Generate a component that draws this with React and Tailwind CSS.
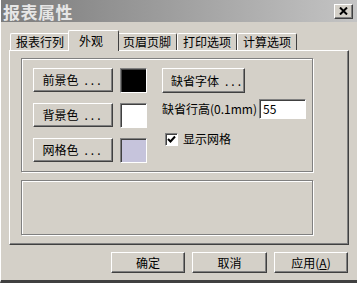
import React from 'react';

const font = { fontFamily: '"Noto Sans CJK SC", "Liberation Sans", sans-serif' };

const raised =
  'bg-[#d4d0c8] border border-t-white border-l-white border-r-[#404040] border-b-[#404040] shadow-[inset_-1px_-1px_0_#808080]';
const sunken =
  'border border-t-[#808080] border-l-[#808080] border-r-white border-b-white shadow-[inset_1px_1px_0_#404040]';
const etched = 'border border-[#808080] shadow-[inset_1px_1px_0_#fff,1px_1px_0_#fff]';

const Btn = ({ children, className = '' }) => (
  <div className={`${raised} flex items-center justify-center whitespace-nowrap text-[12px] text-black ${className}`}>
    {children}
  </div>
);

const Dots = () => <span className="ml-[6px] tracking-[3px]">...</span>;

const ColorRow = ({ label, color }) => (
  <div className="flex items-start gap-[7px]">
    <Btn className="w-[80px] h-[24px]">
      {label}
      <Dots />
    </Btn>
    <div className={`${sunken} w-[27px] h-[25px] ${color}`} />
  </div>
);

const Tab = ({ label, active, className = '' }) =>
  active ? (
    <div
      className={`relative z-10 -mx-[2px] -mb-px h-[21px] w-[51px] bg-[#d4d0c8] border-t border-l border-r border-t-white border-l-white border-r-[#404040] rounded-t-[2px] pl-[10px] pt-[1px] text-[12px] ${className}`}
    >
      {label}
    </div>
  ) : (
    <div
      className={`h-[17px] bg-[#d4d0c8] border-t border-l border-r border-t-white border-l-white border-r-[#404040] rounded-t-[2px] flex items-center justify-center text-[12px] ${className}`}
    >
      {label}
    </div>
  );

export default function App() {
  return (
    <div
      style={font}
      className="w-[357px] h-[283px] bg-[#d4d0c8] text-black overflow-hidden border-l border-l-white border-b-[3px] border-b-[#404040]"
    >
      {/* title bar */}
      <div className="h-[22px] bg-gradient-to-r from-[#7c7c7c] via-[#a0a0a0] to-[#c4c4c4] flex items-center justify-between pl-[2px] pr-[4px]">
        <span className="text-[17px] font-bold text-[#e6e6e6] leading-none tracking-[0.5px]">报表属性</span>
        <div className={`${raised} w-[19px] h-[15px] flex items-center justify-center`}>
          <svg width="9" height="8" viewBox="0 0 9 8">
            <path d="M1 0.5 L8 7.5 M8 0.5 L1 7.5" stroke="#000" strokeWidth="2" />
          </svg>
        </div>
      </div>

      {/* tabs */}
      <div className="mt-[8px] pl-[9px] flex items-end h-[20px]">
        <Tab label="报表行列" className="w-[60px]" />
        <Tab label="外观" active />
        <Tab label="页眉页脚" className="w-[60px]" />
        <Tab label="打印选项" className="w-[60px]" />
        <Tab label="计算选项" className="w-[60px]" />
      </div>

      {/* panel */}
      <div className="ml-[8px] w-[340px] h-[195px] border border-t-white border-l-white border-r-[#404040] border-b-[#404040] shadow-[inset_-1px_-1px_0_#808080] pl-[11px] pt-[7px]">
        <div className={`${etched} w-[292px] h-[114px] pl-[11px] pt-[9px] flex`}>
          <div className="flex flex-col gap-[10px]">
            <ColorRow label="前景色" color="bg-black" />
            <ColorRow label="背景色" color="bg-white" />
            <ColorRow label="网格色" color="bg-[#c6c4dc]" />
          </div>
          <div className="ml-[15px] flex flex-col">
            <Btn className="w-[83px] h-[25px] justify-start pl-[8px]">
              缺省字体
              <Dots />
            </Btn>
            <div className="mt-[6px] flex items-center text-[12px] whitespace-nowrap">
              <span>缺省行高(0.1mm)</span>
              <div className={`${sunken} ml-[2px] w-[47px] h-[20px] bg-white text-[12px] leading-[18px] pl-[3px]`}>
                55
              </div>
            </div>
            <div className="mt-[11px] flex items-center text-[12px] pl-[3px]">
              <div className={`${sunken} w-[13px] h-[13px] bg-white flex items-center justify-center`}>
                <svg width="9" height="9" viewBox="0 0 9 9">
                  <path d="M1 4 L3.5 6.5 L8 1.5" stroke="#000" strokeWidth="2" fill="none" />
                </svg>
              </div>
              <span className="ml-[5px]">显示网格</span>
            </div>
          </div>
        </div>
        <div className={`${etched} mt-[8px] w-[292px] h-[55px]`} />
      </div>

      {/* bottom buttons */}
      <div className="mt-[7px] flex justify-end pr-[9px] gap-[7px]">
        <Btn className="w-[74px] h-[21px]">确定</Btn>
        <Btn className="w-[75px] h-[21px]">取消</Btn>
        <Btn className="w-[74px] h-[21px]">
          应用(<span className="underline">A</span>)
        </Btn>
      </div>
    </div>
  );
}
